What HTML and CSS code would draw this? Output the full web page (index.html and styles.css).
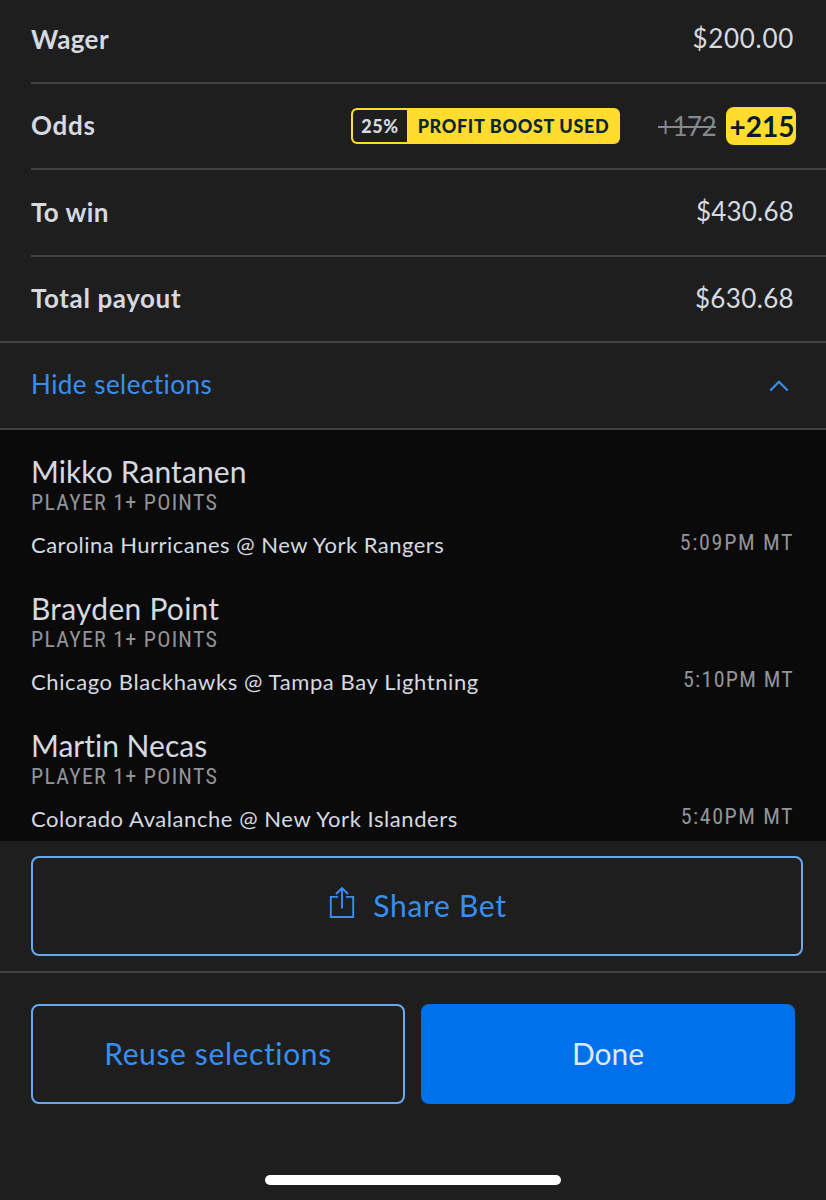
FILE: index.html
```html
<!DOCTYPE html>
<html lang="en">
<head>
    <meta charset="utf-8" />
    <meta name="viewport" content="width=device-width, initial-scale=1" />
    <title>Bet Receipt</title>
    <link rel="stylesheet" href="styles.css">
</head>
<body>
    <div class="bet-slip">
        <div class="summary">
            <div class="row row-wager">
                <span class="label label-wager">Wager</span>
                <span class="value value-wager">$200.00</span>
            </div>
            <div class="row row-odds">
                <span class="label label-odds">Odds</span>
                <div class="boost">
                    <span class="boost-percent">25%</span>
                    <span class="boost-text">PROFIT BOOST USED</span>
                </div>
                <span class="old-odds">+172</span>
                <span class="new-odds">+215</span>
            </div>
            <div class="row row-win">
                <span class="label label-win">To win</span>
                <span class="value value-win">$430.68</span>
            </div>
            <div class="row row-payout">
                <span class="label label-payout">Total payout</span>
                <span class="value value-payout">$630.68</span>
            </div>
        </div>

        <div class="toggle">
            <span class="toggle-text">Hide selections</span>
            <svg class="chevron" width="20" height="12" viewBox="0 0 20 12" fill="none" stroke="currentColor" stroke-width="2.2">
                <path d="M1.3 10.6 L10 1.8 L18.7 10.6" />
            </svg>
        </div>

        <div class="selections">
            <div class="selection">
                <h2 class="player name-rantanen">Mikko Rantanen</h2>
                <div class="market">PLAYER 1+ POINTS</div>
                <div class="game">
                    <span class="teams teams-car">Carolina Hurricanes @ New York Rangers</span>
                    <span class="time time-car">5:09PM MT</span>
                </div>
            </div>
            <div class="selection">
                <h2 class="player name-point">Brayden Point</h2>
                <div class="market">PLAYER 1+ POINTS</div>
                <div class="game">
                    <span class="teams teams-chi">Chicago Blackhawks @ Tampa Bay Lightning</span>
                    <span class="time time-chi">5:10PM MT</span>
                </div>
            </div>
            <div class="selection">
                <h2 class="player name-necas">Martin Necas</h2>
                <div class="market">PLAYER 1+ POINTS</div>
                <div class="game">
                    <span class="teams teams-col">Colorado Avalanche @ New York Islanders</span>
                    <span class="time time-col">5:40PM MT</span>
                </div>
            </div>
        </div>

        <div class="share">
            <button class="button share-button">
                <svg class="share-icon" width="26" height="33" viewBox="0 0 26 33" fill="none" stroke="currentColor" stroke-width="1.9">
                    <path d="M9 10.9 H1.8 V31 H24.2 V10.9 H17" />
                    <path d="M13 22.5 V2" />
                    <path d="M7 8 L13 2 L19 8" />
                </svg>
                <span class="share-text">Share Bet</span>
            </button>
        </div>

        <div class="actions">
            <button class="button reuse-button"><span class="reuse-text">Reuse selections</span></button>
            <button class="button done-button"><span class="done-text">Done</span></button>
        </div>

        <div class="home-indicator"></div>
    </div>
</body>
</html>
```
FILE: styles.css
```css
* {
    margin: 0;
    padding: 0;
    box-sizing: border-box;
}

body {
    font-family: Lato, "Open Sans", sans-serif;
    font-variant-ligatures: none;
    background: #1e1e1e;
    color: #d5d9e0;
}

.bet-slip {
    display: flex;
    flex-direction: column;
    width: 826px;
    height: 1200px;
    overflow: hidden;
}

.summary {
    border-bottom: 2px solid #414143;
}

.row {
    display: flex;
    align-items: center;
    height: 86px;
    margin-left: 31px;
    padding-right: 32px;
    border-bottom: 2px solid #414143;
    font-size: 26px;
    white-space: nowrap;
}

.row-wager {
    height: 84px;
    padding-bottom: 5px;
}

.row-win {
    height: 87px;
}

.row-payout {
    height: 84px;
    border-bottom: none;
}

.label {
    font-weight: 700;
    margin-right: auto;
    padding-bottom: 2px;
}

.label-wager {
    padding-bottom: 0;
    letter-spacing: 0.4px;
}

.label-odds {
    letter-spacing: 0.75px;
}

.label-win {
    letter-spacing: 0.4px;
}

.label-payout {
    letter-spacing: 0.6px;
}

.value {
    padding-bottom: 3px;
}

.value-wager {
    padding-bottom: 2px;
    letter-spacing: 0.7px;
}

.value-win {
    letter-spacing: 0.2px;
}

.value-payout {
    letter-spacing: 0.35px;
}

.boost {
    display: flex;
    align-items: center;
    width: 269px;
    height: 36px;
    border: 2px solid #ffdc2e;
    border-radius: 6px;
    background: #ffdc2e;
    font-size: 18px;
    font-weight: 900;
    overflow: hidden;
}

.boost-percent {
    width: 54px;
    height: 32px;
    line-height: 32px;
    text-align: center;
    letter-spacing: 0.6px;
    background: #1e1e1e;
    border-radius: 4px 0 0 4px;
}

.boost-text {
    flex: 1;
    padding-left: 2px;
    text-align: center;
    letter-spacing: 0.65px;
    color: #0a2533;
}

.old-odds {
    width: 58px;
    margin-left: 38px;
    letter-spacing: -0.6px;
    color: #85888e;
    text-decoration: line-through;
    text-decoration-thickness: 2px;
}

.new-odds {
    display: flex;
    align-items: center;
    justify-content: center;
    width: 70px;
    height: 38px;
    margin-left: 10px;
    margin-right: -2px;
    padding-left: 2px;
    padding-bottom: 1px;
    border-radius: 8px;
    background: #ffdc2e;
    color: #061a2e;
    font-size: 28px;
    font-weight: 700;
}

.toggle {
    display: flex;
    align-items: center;
    justify-content: space-between;
    height: 87px;
    padding: 0 37px 0 31px;
    border-bottom: 2px solid #414143;
    color: #378ff2;
    font-size: 26px;
}

.toggle-text {
    padding-bottom: 3px;
    letter-spacing: 0.47px;
}

.selections {
    height: 411px;
    padding: 23px 34px 0 31px;
    background: #0a0a0a;
    overflow: hidden;
    white-space: nowrap;
}

.selection {
    height: 137px;
}

.player {
    height: 36px;
    line-height: 36px;
    font-size: 30px;
    font-weight: 400;
}

.name-rantanen {
    letter-spacing: 0.1px;
}

.name-point {
    letter-spacing: 0.25px;
}

.name-necas {
    letter-spacing: 0;
}

.market,
.time {
    font-family: "Roboto Condensed", Roboto, sans-serif;
    font-stretch: 75%;
    font-size: 22px;
    color: #929499;
}

.market {
    height: 26px;
    line-height: 27px;
    letter-spacing: 1.22px;
}

.game {
    display: flex;
    justify-content: space-between;
    margin-top: 14px;
    font-size: 22px;
    line-height: 32px;
}

.teams-car {
    letter-spacing: 0.48px;
}

.teams-chi {
    letter-spacing: 0.6px;
}

.teams-col {
    letter-spacing: 0.56px;
}

.time {
    line-height: 27px;
    margin-right: -2px;
}

.time-car {
    letter-spacing: 1.65px;
}

.time-chi {
    letter-spacing: 1.3px;
}

.time-col {
    letter-spacing: 1.55px;
}

.share {
    height: 132px;
    padding: 15px 23px 15px 31px;
    border-bottom: 2px solid #414143;
}

.button {
    display: flex;
    align-items: center;
    justify-content: center;
    width: 100%;
    height: 100px;
    border: 2px solid #68a9f4;
    border-radius: 8px;
    background: transparent;
    color: #378ff2;
    font-family: inherit;
    font-size: 30px;
}

.button span {
    padding-bottom: 2px;
}

.share-icon {
    margin-right: 18px;
    margin-top: -7px;
}

.share-text {
    letter-spacing: 0.7px;
    margin-right: -2px;
}

.actions {
    display: grid;
    grid-template-columns: 374px 374px;
    gap: 16px;
    padding: 31px 0 0 31px;
}

.reuse-text {
    letter-spacing: 0.62px;
}

.done-button {
    border-color: #0070eb;
    background: #0070eb;
    color: #dbe9fb;
}

.home-indicator {
    width: 296px;
    height: 10px;
    margin: 71px auto 0;
    border-radius: 5px;
    background: #fff;
}
```
